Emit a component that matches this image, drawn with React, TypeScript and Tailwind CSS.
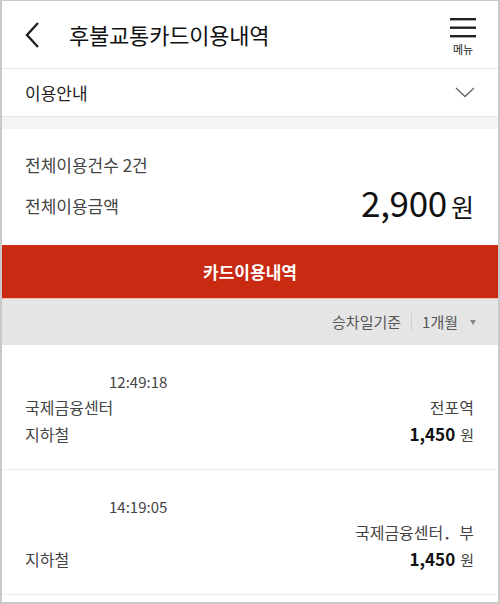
import React from "react";

const font = { fontFamily: '"Noto Sans CJK KR", "Noto Sans", sans-serif' };

function Item({ time, from, to, type, fare }: { time: string; from: string; to: string; type: string; fare: string }) {
  return (
    <div className="border-b border-[#ececec] h-[125px] flex flex-col pt-[26px] pl-[23px] pr-[24px]">
      <div className="pl-[84px] text-[15px] leading-[22px] text-[#444]">{time}</div>
      <div className="flex justify-between items-center mt-[2px] h-[24px] text-[16px] text-[#444]">
        <span>{from}</span>
        <span>{to}</span>
      </div>
      <div className="flex justify-between items-center mt-[2px] h-[26px]">
        <span className="text-[16px] text-[#444]">{type}</span>
        <span className="flex items-baseline gap-[5px]">
          <span className="text-[17px] font-bold text-[#111]">{fare}</span>
          <span className="text-[15px] text-[#444]">원</span>
        </span>
      </div>
    </div>
  );
}

export default function App() {
  return (
    <div style={font} className="w-[500px] h-[604px] bg-white border-2 border-[#c9c9c9] border-t-[1px] overflow-hidden flex flex-col">
      <div className="h-[68px] flex items-center border-b border-[#e6e6e6] shrink-0">
        <svg width="20" height="28" viewBox="0 0 20 28" className="ml-[21px]">
          <path d="M15 2 L4 14 L15 26" fill="none" stroke="#222" strokeWidth="2.4" />
        </svg>
        <div className="ml-[26px] text-[22px] text-[#111] tracking-[-0.2px]">후불교통카드이용내역</div>
        <div className="ml-auto mr-[22px] flex flex-col items-center mt-[4px]">
          <svg width="26" height="20" viewBox="0 0 26 20">
            <rect x="0" y="0" width="26" height="2.4" fill="#222" />
            <rect x="0" y="8.5" width="26" height="2.4" fill="#222" />
            <rect x="0" y="17" width="26" height="2.4" fill="#222" />
          </svg>
          <div className="text-[11px] leading-[14px] text-[#222] mt-[4px]">메뉴</div>
        </div>
      </div>
      <div className="h-[48px] flex items-center justify-between pl-[23px] pr-[24px] border-b border-[#e6e6e6] shrink-0">
        <span className="text-[17px] text-[#222]">이용안내</span>
        <svg width="20" height="11" viewBox="0 0 20 11" className="mr-[-1px]">
          <path d="M1 1 L10 9.5 L19 1" fill="none" stroke="#666" strokeWidth="1.4" />
        </svg>
      </div>
      <div className="h-[12px] bg-[#f4f4f4] shrink-0" />
      <div className="h-[116px] pl-[23px] pr-[24px] pt-[23px] shrink-0">
        <div className="text-[17px] leading-[26px] text-[#444]">전체이용건수 2건</div>
        <div className="flex justify-between items-center mt-[2px]">
          <span className="text-[17px] text-[#444] mt-[5px]">전체이용금액</span>
          <span className="flex items-baseline">
            <span className="text-[35px] leading-[44px] text-[#111] tracking-[-0.3px]">2,900</span>
            <span className="text-[25px] text-[#111] ml-[4px]">원</span>
          </span>
        </div>
      </div>
      <div className="h-[54px] bg-[#c82a12] flex items-center justify-center border-b border-[#f4b8ad] shrink-0">
        <span className="text-[17px] font-bold text-white">카드이용내역</span>
      </div>
      <div className="h-[46px] bg-[#e5e5e5] flex items-center justify-end pr-[22px] shrink-0">
        <span className="text-[15px] text-[#555]">승차일기준</span>
        <span className="w-px h-[18px] bg-[#cfcfcf] mx-[10px]" />
        <span className="text-[15px] text-[#555]">1개월</span>
        <svg width="6" height="5" viewBox="0 0 6 5" className="ml-[12px]">
          <path d="M0 0 L6 0 L3 5 Z" fill="#888" />
        </svg>
      </div>
      <Item time="12:49:18" from="국제금융센터" to="전포역" type="지하철" fare="1,450" />
      <Item time="14:19:05" from="" to="국제금융센터．부" type="지하철" fare="1,450" />
    </div>
  );
}
